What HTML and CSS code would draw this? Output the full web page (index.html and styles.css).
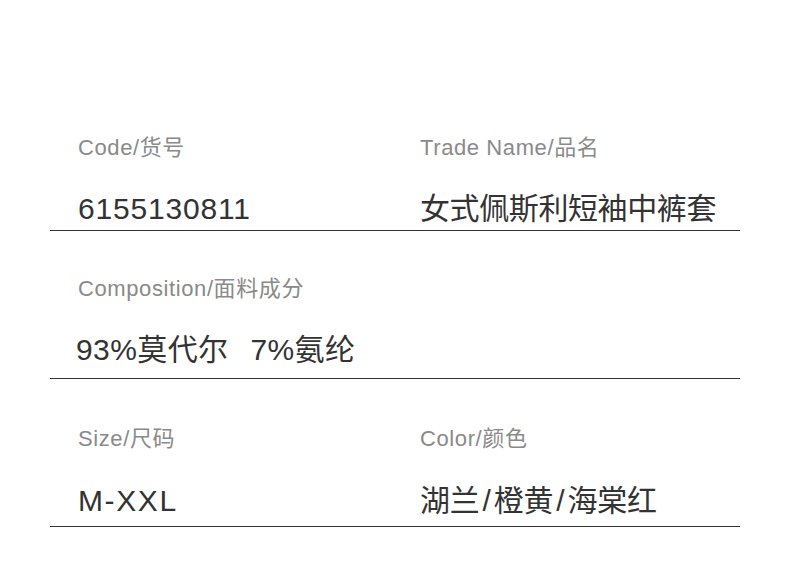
FILE: index.html
```html
<!DOCTYPE html>
<html lang="zh-CN">
<head>
<meta charset="utf-8">
<link rel="stylesheet" href="styles.css">
</head>
<body>
<div class="sheet">
  <div class="row row-1">
    <div class="cell cell-left">
      <div class="label">Code/货号</div>
      <div class="value">6155130811</div>
    </div>
    <div class="cell">
      <div class="label">Trade Name/品名</div>
      <div class="value value-cjk">女式佩斯利短袖中裤套</div>
    </div>
  </div>
  <div class="row row-2">
    <div class="cell cell-left">
      <div class="label">Composition/面料成分</div>
      <div class="value value-mixed">93%莫代尔<span class="sep"></span>7%氨纶</div>
    </div>
  </div>
  <div class="row row-3">
    <div class="cell cell-left">
      <div class="label">Size/尺码</div>
      <div class="value value-size">M-XXL</div>
    </div>
    <div class="cell">
      <div class="label">Color/颜色</div>
      <div class="value value-color">湖兰<span class="slash">/</span>橙黄<span class="slash">/</span>海棠红</div>
    </div>
  </div>
</div>
</body>
</html>
```

FILE: styles.css
```css
html, body {
  margin: 0;
  padding: 0;
  background: #ffffff;
}

body {
  font-family: "Liberation Sans", "Noto Sans CJK SC", sans-serif;
  width: 790px;
  height: 568px;
  overflow: hidden;
}

.sheet {
  margin-left: 50px;
  width: 690px;
  padding-top: 133px;
}

.row {
  display: grid;
  grid-template-columns: 370px 1fr;
  border-bottom: 1px solid #333333;
}

.row-1 { padding-bottom: 1px; }
.row-2 { padding-top: 43px; padding-bottom: 8px; }
.row-3 { padding-top: 45px; padding-bottom: 5px; }

.cell {
  display: flex;
  flex-direction: column;
  gap: 26px;
}

.cell-left {
  padding-left: 28px;
}

.row-3 .cell {
  gap: 27px;
}

.label {
  font-size: 22px;
  line-height: 30px;
  color: #8a8a8a;
  letter-spacing: 0.6px;
  white-space: nowrap;
}

.value {
  font-size: 30px;
  line-height: 40px;
  color: #333333;
  letter-spacing: 0.8px;
  white-space: nowrap;
}

.value-cjk {
  letter-spacing: -0.4px;
}

.value-color {
  letter-spacing: -0.2px;
}

.slash {
  margin: 0 3px;
}

.value-mixed {
  margin-left: -2px;
  letter-spacing: 0.4px;
}

.value-size {
  letter-spacing: 1.6px;
}

.sep {
  display: inline-block;
  width: 22px;
}
```
